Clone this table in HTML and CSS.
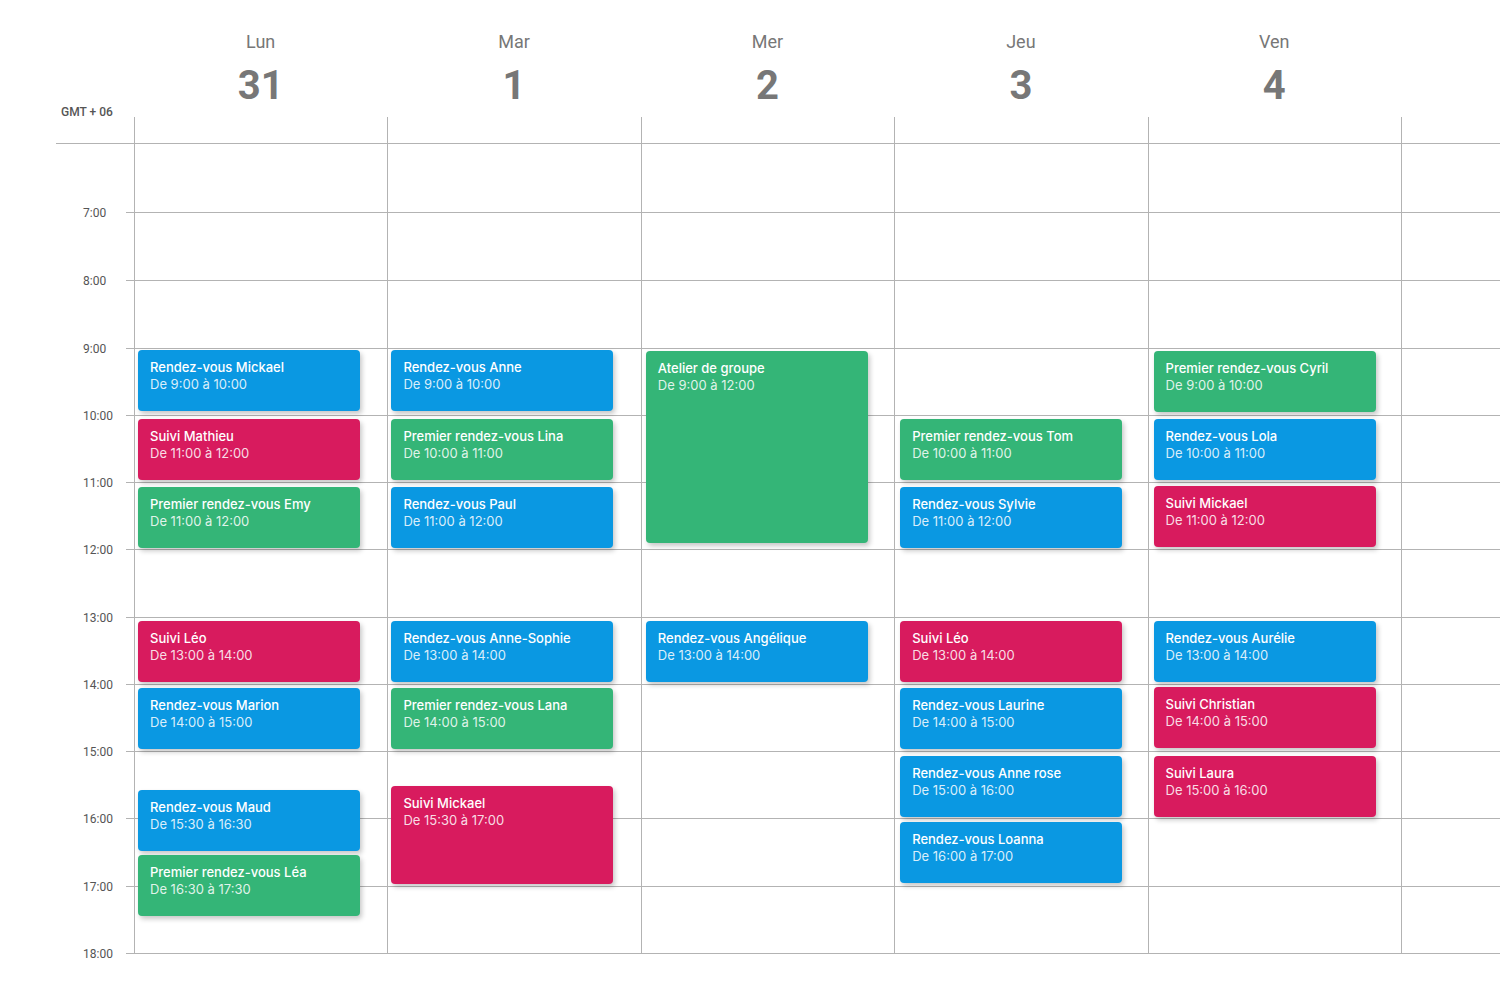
FILE: index.html
```html
<!DOCTYPE html>
<html lang="fr">
<head>
<meta charset="utf-8">
<title>Agenda</title>
<link rel="stylesheet" href="styles.css">
</head>
<body>
<div class="cal">
  <div class="head">
    <div class="tz">GMT + 06</div>
    <div class="day"><div class="dname">Lun</div><div class="dnum">31</div></div>
    <div class="day"><div class="dname">Mar</div><div class="dnum">1</div></div>
    <div class="day"><div class="dname">Mer</div><div class="dnum">2</div></div>
    <div class="day"><div class="dname">Jeu</div><div class="dnum">3</div></div>
    <div class="day"><div class="dname">Ven</div><div class="dnum">4</div></div>
    <div class="day"></div>
  </div>

  <div class="grid">
    <div class="hline first r2"></div>
    <div class="hline r3"></div><div class="tlabel r3">7:00</div>
    <div class="hline r4"></div><div class="tlabel r4">8:00</div>
    <div class="hline r5"></div><div class="tlabel r5">9:00</div>
    <div class="hline r6"></div><div class="tlabel r6">10:00</div>
    <div class="hline r7"></div><div class="tlabel r7">11:00</div>
    <div class="hline r8"></div><div class="tlabel r8">12:00</div>
    <div class="hline r9"></div><div class="tlabel r9">13:00</div>
    <div class="hline r10"></div><div class="tlabel r10">14:00</div>
    <div class="hline r11"></div><div class="tlabel r11">15:00</div>
    <div class="hline r12"></div><div class="tlabel r12">16:00</div>
    <div class="hline r13"></div><div class="tlabel r13">17:00</div>
    <div class="hline r14"></div><div class="tlabel r14">18:00</div>

    <div class="col c2">
      <div class="ev blue" style="top:233px;height:61px"><div class="t">Rendez-vous Mickael</div><div class="h">De 9:00 à 10:00</div></div>
      <div class="ev red" style="top:302px;height:61px"><div class="t">Suivi Mathieu</div><div class="h">De 11:00 à 12:00</div></div>
      <div class="ev green" style="top:370px;height:61px"><div class="t">Premier rendez-vous Emy</div><div class="h">De 11:00 à 12:00</div></div>
      <div class="ev red" style="top:504px;height:61px"><div class="t">Suivi Léo</div><div class="h">De 13:00 à 14:00</div></div>
      <div class="ev blue" style="top:571px;height:61px"><div class="t">Rendez-vous Marion</div><div class="h">De 14:00 à 15:00</div></div>
      <div class="ev blue" style="top:673px;height:61px"><div class="t">Rendez-vous Maud</div><div class="h">De 15:30 à 16:30</div></div>
      <div class="ev green" style="top:738px;height:61px"><div class="t">Premier rendez-vous Léa</div><div class="h">De 16:30 à 17:30</div></div>
    </div>
    <div class="col c3">
      <div class="ev blue" style="top:233px;height:61px"><div class="t">Rendez-vous Anne</div><div class="h">De 9:00 à 10:00</div></div>
      <div class="ev green" style="top:302px;height:61px"><div class="t">Premier rendez-vous Lina</div><div class="h">De 10:00 à 11:00</div></div>
      <div class="ev blue" style="top:370px;height:61px"><div class="t">Rendez-vous Paul</div><div class="h">De 11:00 à 12:00</div></div>
      <div class="ev blue" style="top:504px;height:61px"><div class="t">Rendez-vous Anne-Sophie</div><div class="h">De 13:00 à 14:00</div></div>
      <div class="ev green" style="top:571px;height:61px"><div class="t">Premier rendez-vous Lana</div><div class="h">De 14:00 à 15:00</div></div>
      <div class="ev red" style="top:669px;height:98px"><div class="t">Suivi Mickael</div><div class="h">De 15:30 à 17:00</div></div>
    </div>
    <div class="col c4">
      <div class="ev green" style="top:234px;height:192px"><div class="t">Atelier de groupe</div><div class="h">De 9:00 à 12:00</div></div>
      <div class="ev blue" style="top:504px;height:61px"><div class="t">Rendez-vous Angélique</div><div class="h">De 13:00 à 14:00</div></div>
    </div>
    <div class="col c5">
      <div class="ev green" style="top:302px;height:61px"><div class="t">Premier rendez-vous Tom</div><div class="h">De 10:00 à 11:00</div></div>
      <div class="ev blue" style="top:370px;height:61px"><div class="t">Rendez-vous Sylvie</div><div class="h">De 11:00 à 12:00</div></div>
      <div class="ev red" style="top:504px;height:61px"><div class="t">Suivi Léo</div><div class="h">De 13:00 à 14:00</div></div>
      <div class="ev blue" style="top:571px;height:61px"><div class="t">Rendez-vous Laurine</div><div class="h">De 14:00 à 15:00</div></div>
      <div class="ev blue" style="top:639px;height:61px"><div class="t">Rendez-vous Anne rose</div><div class="h">De 15:00 à 16:00</div></div>
      <div class="ev blue" style="top:705px;height:61px"><div class="t">Rendez-vous Loanna</div><div class="h">De 16:00 à 17:00</div></div>
    </div>
    <div class="col c6">
      <div class="ev green" style="top:234px;height:61px"><div class="t">Premier rendez-vous Cyril</div><div class="h">De 9:00 à 10:00</div></div>
      <div class="ev blue" style="top:302px;height:61px"><div class="t">Rendez-vous Lola</div><div class="h">De 10:00 à 11:00</div></div>
      <div class="ev red" style="top:369px;height:61px"><div class="t">Suivi Mickael</div><div class="h">De 11:00 à 12:00</div></div>
      <div class="ev blue" style="top:504px;height:61px"><div class="t">Rendez-vous Aurélie</div><div class="h">De 13:00 à 14:00</div></div>
      <div class="ev red" style="top:570px;height:61px"><div class="t">Suivi Christian</div><div class="h">De 14:00 à 15:00</div></div>
      <div class="ev red" style="top:639px;height:61px"><div class="t">Suivi Laura</div><div class="h">De 15:00 à 16:00</div></div>
    </div>
    <div class="col c7"></div>
  </div>
</div>
</body>
</html>
```

FILE: styles.css
```css
* { box-sizing: border-box; }
html, body { margin: 0; padding: 0; background: #fff; }
body {
  width: 1500px;
  height: 1000px;
  overflow: hidden;
  font-family: Roboto, "Liberation Sans", sans-serif;
}
.cal { width: 1500px; }

.head {
  display: grid;
  grid-template-columns: 134px repeat(5, 253.4px) 1fr;
  height: 117px;
}
.tz {
  padding-top: 105px;
  padding-left: 61px;
  font-size: 12px;
  line-height: 14px;
  font-weight: 500;
  color: #555;
  white-space: nowrap;
}
.day {
  display: flex;
  flex-direction: column;
  align-items: center;
  padding-top: 32px;
  color: #777;
}
.dname {
  font-size: 18px;
  line-height: 20px;
}
.dnum {
  margin-top: 12px;
  font-size: 40px;
  line-height: 44px;
  font-weight: 700;
}

.grid {
  display: grid;
  grid-template-columns: 134px repeat(5, 253.4px) 1fr;
  grid-template-rows: 26px 69px 68px 68px 67px 67px 67px 68px 67px 67px 67px 68px 67px 30px;
}
.hline {
  grid-column: 1 / -1;
  margin-left: 126px;
  border-top: 1px solid #b3b3b3;
}
.hline.first { margin-left: 56px; }
.tlabel {
  grid-column: 1;
  align-self: start;
  margin-top: -7px;
  padding-left: 83px;
  font-size: 12px;
  line-height: 16px;
  color: #555;
}
.r2 { grid-row: 2; }
.r3 { grid-row: 3; }
.r4 { grid-row: 4; }
.r5 { grid-row: 5; }
.r6 { grid-row: 6; }
.r7 { grid-row: 7; }
.r8 { grid-row: 8; }
.r9 { grid-row: 9; }
.r10 { grid-row: 10; }
.r11 { grid-row: 11; }
.r12 { grid-row: 12; }
.r13 { grid-row: 13; }
.r14 { grid-row: 14; }

.col {
  grid-row: 1 / 14;
  position: relative;
  border-left: 1px solid #b3b3b3;
}
.c2 { grid-column: 2; }
.c3 { grid-column: 3; }
.c4 { grid-column: 4; }
.c5 { grid-column: 5; }
.c6 { grid-column: 6; }
.c7 { grid-column: 7; }

.ev {
  position: absolute;
  z-index: 1;
  left: 3px;
  width: 222px;
  padding: 9px 12px 0;
  border-radius: 4px;
  box-shadow: 2px 3px 5px rgba(0, 0, 0, 0.22);
  font-family: Inter, "Noto Sans", sans-serif;
  font-size: 13px;
  line-height: 17px;
  color: #fff;
}
.c4 .ev { left: 4px; }
.c5 .ev, .c6 .ev { left: 5px; }
.ev .t { font-weight: 500; }
.ev .h { color: rgba(255, 255, 255, 0.86); }
.blue { background: #0a98e2; }
.red { background: #d81b5e; }
.green { background: #34b577; }
```
